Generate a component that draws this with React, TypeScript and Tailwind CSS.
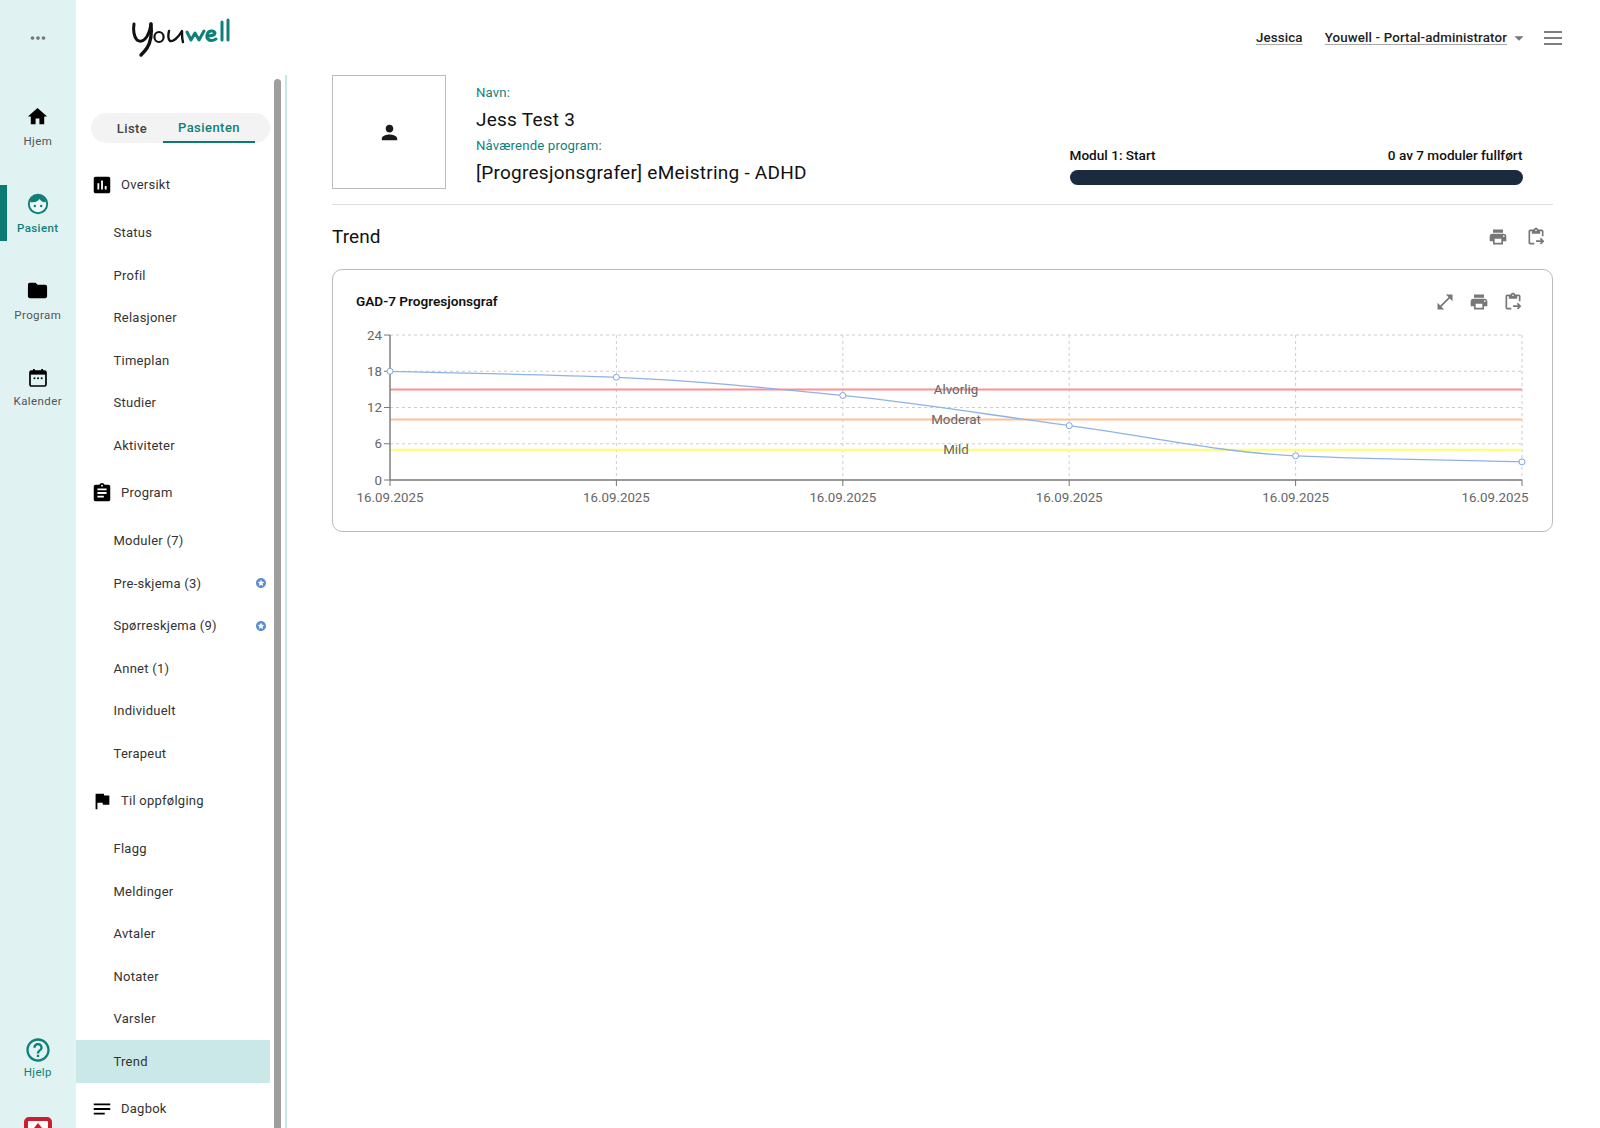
import type { ReactNode } from "react";
import {
  MdArrowDropDown,
  MdAssessment,
  MdAssignment,
  MdContentPasteGo,
  MdFlag,
  MdFolder,
  MdHelpOutline,
  MdHome,
  MdMoreHoriz,
  MdNotes,
  MdOpenInFull,
  MdPerson,
  MdPrint,
  MdStars,
} from "react-icons/md";

type NavGroup = {
  title: string;
  icon: ReactNode;
  items: { label: string; badge?: boolean; active?: boolean }[];
};

const groupIcon = "h-[22px] w-[22px] text-black";

const navGroups: NavGroup[] = [
  {
    title: "Oversikt",
    icon: <MdAssessment className={groupIcon} />,
    items: [
      { label: "Status" },
      { label: "Profil" },
      { label: "Relasjoner" },
      { label: "Timeplan" },
      { label: "Studier" },
      { label: "Aktiviteter" },
    ],
  },
  {
    title: "Program",
    icon: <MdAssignment className={groupIcon} />,
    items: [
      { label: "Moduler (7)" },
      { label: "Pre-skjema (3)", badge: true },
      { label: "Spørreskjema (9)", badge: true },
      { label: "Annet (1)" },
      { label: "Individuelt" },
      { label: "Terapeut" },
    ],
  },
  {
    title: "Til oppfølging",
    icon: <MdFlag className={groupIcon} />,
    items: [
      { label: "Flagg" },
      { label: "Meldinger" },
      { label: "Avtaler" },
      { label: "Notater" },
      { label: "Varsler" },
      { label: "Trend", active: true },
    ],
  },
  {
    title: "Dagbok",
    icon: <MdNotes className={groupIcon} />,
    items: [],
  },
];

function CalendarIcon() {
  return (
    <svg viewBox="0 0 20 20" className="h-5 w-5" fill="none">
      <rect x="2" y="3" width="16" height="15" rx="1.5" stroke="#000" strokeWidth="1.7" />
      <rect x="2" y="3" width="16" height="3.6" fill="#000" />
      <rect x="5" y="1" width="1.8" height="3" fill="#000" />
      <rect x="13.2" y="1" width="1.8" height="3" fill="#000" />
      <rect x="5.6" y="9.4" width="1.7" height="1.7" fill="#000" />
      <rect x="9.2" y="9.4" width="1.7" height="1.7" fill="#000" />
      <rect x="12.8" y="9.4" width="1.7" height="1.7" fill="#000" />
    </svg>
  );
}

function FaceIcon() {
  return (
    <svg viewBox="0 0 22 22" className="h-[22px] w-[22px]">
      <circle cx="11" cy="11" r="9.2" fill="#eef8f7" stroke="#0f7f7a" strokeWidth="1.9" />
      <path d="M3 9c4 1 8-.5 9.5-3 1.5 2.5 4 3.5 6.5 3C18 4.500 15 2 11 2 7 2 4 4.500 3 9z" fill="#0f7f7a" />
      <circle cx="7.800" cy="13" r="1.200" fill="#0f7f7a" />
      <circle cx="14.200" cy="13" r="1.200" fill="#0f7f7a" />
    </svg>
  );
}

function RailItem({ icon, label, active }: { icon: ReactNode; label: string; active?: boolean }) {
  return (
    <div className={`relative flex h-14 flex-col items-center justify-center gap-[5px] pt-[2px] ${active ? "text-[#0f7f7a]" : "text-[#555]"}`}>
      {active && <div className="absolute inset-y-0 left-0 w-[7px] bg-[#0b7b72]" />}
      {icon}
      <span className={`text-[11.5px] leading-[16px] tracking-[0.4px] ${active ? "font-medium" : "font-normal"}`}>{label}</span>
    </div>
  );
}

function Rail() {
  return (
    <aside className="flex h-full w-[75.5px] shrink-0 flex-col bg-[#e0f2f1]">
      <div className="flex h-[76px] items-center justify-center">
        <MdMoreHoriz className="h-[22px] w-[22px] text-[#777]" />
      </div>
      <div className="mt-[22px] flex flex-col gap-[31px]">
        <RailItem icon={<MdHome className="h-[23px] w-[23px] text-black" />} label="Hjem" />
        <RailItem active icon={<FaceIcon />} label="Pasient" />
        <RailItem icon={<MdFolder className="h-[23px] w-[23px] text-black" />} label="Program" />
        <RailItem icon={<CalendarIcon />} label="Kalender" />
      </div>
      <div className="mt-auto flex flex-col items-center">
        <div className="flex flex-col items-center text-[#0f7f7a]">
          <MdHelpOutline className="h-7 w-7" />
          <span className="text-[11.5px] leading-[16px] tracking-[0.3px]">Hjelp</span>
        </div>
        <div className="mt-[37px] mb-[-19px] flex h-[30px] w-[28px] items-start justify-center rounded-[5px] border-[4px] border-[#c8202f] bg-white pt-[2px]">
          <svg viewBox="0 0 12 8" className="h-2 w-3" fill="#c8202f">
            <path d="M6 0l4 5H2z" />
          </svg>
        </div>
      </div>
    </aside>
  );
}

function Logo() {
  return (
    <svg viewBox="130 18 104 40" className="ml-[55.5px] h-10 w-[104px]" fill="none" strokeLinecap="round" strokeLinejoin="round">
      <g stroke="#111" strokeWidth="3">
        <path d="M133 24c-1 6 0 13 3 16 3 2 6 1 8-1 3-3 5-9 6-15" />
        <path d="M150 24c1 10 0 18-4 24-2 3-4 5-6 7" strokeWidth="3.400" />
        <ellipse cx="158" cy="37" rx="4.600" ry="5" strokeWidth="2.200" />
        <path d="M168 31c-1 4-1 8 1 10 3 1 8-3 12-10 0 4 0 8 1 11" strokeWidth="2.400" />
      </g>
      <g stroke="#0f7f7a" strokeWidth="3">
        <path d="M186 32l4 8 4-7 4 7 5-9" />
        <path d="M206 36c4 0 8-1 8-3-1-3-7-3-8 2-1 5 4 7 9 4" />
        <path d="M221 22v18" />
        <path d="M227 20v20" />
      </g>
    </svg>
  );
}

function Sidebar() {
  return (
    <div className="flex h-full shrink-0">
      <div className="w-[194.5px]">
        <div className="flex h-[75px] items-start pt-[18px]">
          <Logo />
        </div>
        <div className="mt-[38px] ml-[15.5px] flex h-[30px] items-stretch rounded-full bg-[#f3f3f3] text-[13px] font-medium tracking-[0.4px]">
          <div className="flex w-[72px] items-center justify-center pt-[1px] pl-[10px] text-[#444]">Liste</div>
          <div className="flex w-[92px] items-center justify-center border-b-2 border-[#0b7b72] pt-[1px] tracking-[0.45px] text-[#0f7f7a]">Pasienten</div>
        </div>
        <nav className="mt-[15.5px]">
          {navGroups.map((group) => (
            <div key={group.title}>
              <div className="flex h-[53px] items-center gap-[8px] pl-[15.5px] text-[13px] tracking-[0.25px] text-[#333]">
                {group.icon}
                <span>{group.title}</span>
              </div>
              {group.items.map((item) => (
                <div
                  key={item.label}
                  className={`flex h-[42.5px] items-center justify-between pr-[3px] pl-[38px] text-[13px] tracking-[0.25px] text-[#333] ${item.active ? "bg-[#cae8e7]" : ""}`}
                >
                  <span>{item.label}</span>
                  {item.badge && <MdStars className="h-3 w-3 text-[#5b8dd6]" />}
                </div>
              ))}
            </div>
          ))}
        </nav>
      </div>
      <div className="mt-[79px] ml-1 w-[7px] rounded-t-full bg-[#9e9e9e]" />
      <div className="mt-[75px] ml-1 w-[2px] bg-[#c5e9e9]" />
    </div>
  );
}

function TopBar() {
  return (
    <header className="flex h-[75px] items-center justify-end pr-[38px] text-[13.3px] font-medium tracking-[0.15px] text-[#222]">
      <a className="underline underline-offset-2 decoration-[#aaa]">Jessica</a>
      <a className="ml-[22px] underline underline-offset-2 decoration-[#aaa]">Youwell - Portal-administrator</a>
      <MdArrowDropDown className="ml-[1px] h-[22px] w-[22px] text-[#777]" />
      <svg viewBox="0 0 18 14" className="ml-[14px] h-[14px] w-[18px]" stroke="#555" strokeWidth="1.4">
        <path d="M0 1h18M0 7h18M0 13h18" />
      </svg>
    </header>
  );
}

function PatientHead() {
  return (
    <section className="flex h-[130px] border-b border-[#ddd]">
      <div className="flex h-[114px] w-[114px] items-center justify-center border border-[#bbb]">
        <MdPerson className="h-[23px] w-[23px] text-[#1a1a1a]" />
      </div>
      <div className="ml-[30px] pt-[9px]">
        <div className="text-[13.2px] leading-[18px] tracking-[0.15px] text-[#0f7f7a]">Navn:</div>
        <div className="mt-[6px] text-[19px] leading-[24px] tracking-[0.25px] text-[#111]">Jess Test 3</div>
        <div className="mt-[5px] text-[13.2px] leading-[18px] tracking-[0.15px] text-[#0f7f7a]">Nåværende program:</div>
        <div className="mt-[6px] text-[19px] leading-[24px] tracking-[0.25px] text-[#111]">[Progresjonsgrafer] eMeistring - ADHD</div>
      </div>
      <div className="mt-auto mr-[30px] mb-[19px] ml-auto w-[453px]">
        <div className="flex justify-between text-[13.6px] leading-[18px] font-medium text-[#111]">
          <span>Modul 1: Start</span>
          <span>0 av 7 moduler fullført</span>
        </div>
        <div className="mt-[6px] h-[15px] rounded-full bg-[#1a2b40]" />
      </div>
    </section>
  );
}

const plot = { left: 390, top: 335, step: 226.4, unit: 6.04, bottom: 480 };
const values = [18, 17, 14, 9, 4, 3];
const px = (i: number) => plot.left + plot.step * i;
const py = (v: number) => plot.bottom - v * plot.unit;

// monotone x interpolation, same shape as the chart's line
function monotonePath(vals: number[]) {
  const slopes = vals.slice(1).map((v, i) => (py(v) - py(vals[i])) / plot.step);
  const tangents = vals.map((_, i) => {
    if (i === 0) return slopes[0];
    if (i === vals.length - 1) return slopes[i - 1];
    const a = slopes[i - 1];
    const b = slopes[i];
    return a * b <= 0 ? 0 : (2 * a * b) / (a + b);
  });
  let d = `M${px(0)} ${py(vals[0])}`;
  for (let i = 0; i < vals.length - 1; i++) {
    const dx = plot.step / 3;
    d += `C${px(i) + dx} ${py(vals[i]) + tangents[i] * dx} ${px(i + 1) - dx} ${py(vals[i + 1]) - tangents[i + 1] * dx} ${px(i + 1)} ${py(vals[i + 1])}`;
  }
  return d;
}

const levels = [
  { value: 15, label: "Alvorlig", color: "#ff8f94" },
  { value: 10, label: "Moderat", color: "#ffbf8f" },
  { value: 5, label: "Mild", color: "#ffff66" },
];

const xLabelCenters = [0, 1, 2, 3, 4].map(px).concat(1495);

function Chart() {
  const right = px(5);
  return (
    <svg viewBox="333 320 1218 190" className="h-[190px] w-[1218px]" fontFamily="Roboto, sans-serif">
      <g stroke="#ccc" strokeDasharray="3 3" fill="none">
        {[24, 18, 12, 6].map((v) => (
          <line key={v} x1={plot.left} x2={right} y1={py(v)} y2={py(v)} />
        ))}
        {[1, 2, 3, 4, 5].map((i) => (
          <line key={i} x1={px(i)} x2={px(i)} y1={plot.top} y2={plot.bottom} />
        ))}
      </g>
      {levels.map((l) => (
        <g key={l.value}>
          <line x1={plot.left} x2={right} y1={py(l.value)} y2={py(l.value)} stroke={l.color} strokeWidth="2" />
          <text x={956} y={py(l.value) + 4.5} textAnchor="middle" fontSize="13.3" fill="#666">
            {l.label}
          </text>
        </g>
      ))}
      <g stroke="#777">
        <line x1={plot.left} x2={plot.left} y1={plot.top} y2={plot.bottom} strokeWidth="1.4" />
        <line x1={plot.left} x2={right} y1={plot.bottom} y2={plot.bottom} strokeWidth="1.4" />
        {[24, 18, 12, 6, 0].map((v) => (
          <line key={v} x1={plot.left - 6} x2={plot.left} y1={py(v)} y2={py(v)} />
        ))}
        {[0, 1, 2, 3, 4, 5].map((i) => (
          <line key={i} x1={px(i)} x2={px(i)} y1={plot.bottom} y2={plot.bottom + 6} />
        ))}
      </g>
      <path d={monotonePath(values)} fill="none" stroke="#8fb2e6" strokeWidth="1.3" />
      {values.map((v, i) => (
        <circle key={i} cx={px(i)} cy={py(v)} r="3" fill="#fff" stroke="#7ea5e0" strokeWidth="1" />
      ))}
      <g fontSize="13.3" fill="#666">
        {[24, 18, 12, 6, 0].map((v) => (
          <text key={v} x={plot.left - 8} y={py(v) + 4.5} textAnchor="end">
            {v}
          </text>
        ))}
        {xLabelCenters.map((x, i) => (
          <text key={i} x={x} y={502} textAnchor="middle">
            16.09.2025
          </text>
        ))}
      </g>
    </svg>
  );
}

function TrendSection() {
  return (
    <section>
      <div className="flex h-[64px] items-center justify-between">
        <h1 className="pt-[1px] text-[19px] tracking-[0.1px] text-[#111]">Trend</h1>
        <div className="mr-[7px] flex gap-[18px] text-[#777]">
          <MdPrint className="h-5 w-5" />
          <MdContentPasteGo className="h-5 w-5" />
        </div>
      </div>
      <div className="h-[263px] rounded-[10px] border border-[#bbb]">
        <div className="flex h-[50px] items-end justify-between pr-[29px] pb-[8px] pl-[23px]">
          <h2 className="pb-[2px] text-[13.6px] leading-[18px] font-semibold text-[#111]">GAD-7 Progresjonsgraf</h2>
          <div className="flex gap-[14px] text-[#777]">
            <MdOpenInFull className="h-5 w-5" />
            <MdPrint className="h-5 w-5" />
            <MdContentPasteGo className="h-5 w-5" />
          </div>
        </div>
        <Chart />
      </div>
    </section>
  );
}

export default function App() {
  return (
    <div className="flex h-[1128px] w-[1600px] overflow-hidden bg-white font-['Roboto',sans-serif]">
      <Rail />
      <Sidebar />
      <main className="min-w-0 flex-1">
        <TopBar />
        <div className="pr-[47.5px] pl-[45px]">
          <PatientHead />
          <TrendSection />
        </div>
      </main>
    </div>
  );
}
